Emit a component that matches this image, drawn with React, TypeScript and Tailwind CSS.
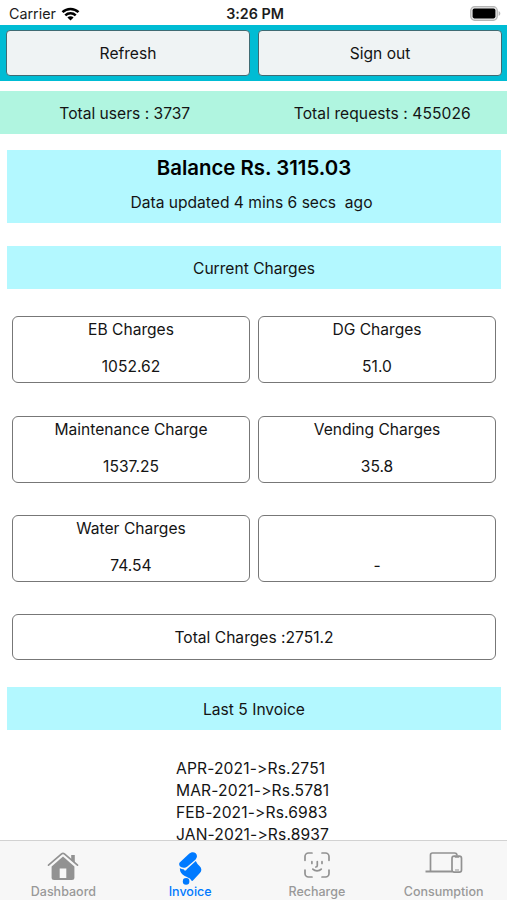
import React from 'react'

type Tab = {
  label: string
  icon: React.ReactNode
  active?: boolean
}

const charges = [
  { label: 'EB Charges', value: '1052.62' },
  { label: 'DG Charges', value: '51.0' },
  { label: 'Maintenance Charge', value: '1537.25' },
  { label: 'Vending Charges', value: '35.8' },
  { label: 'Water Charges', value: '74.54' },
  { label: '', value: '-' },
]

const invoices = ['APR-2021->Rs.2751', 'MAR-2021->Rs.5781', 'FEB-2021->Rs.6983', 'JAN-2021->Rs.8937']

const WifiIcon = () => (
  <svg width="19" height="14" viewBox="0 0 18 14" fill="none" stroke="#000" strokeWidth="2.5">
    <path d="M1 5.2a11.4 11.4 0 0 1 16 0" />
    <path d="M3.8 8.3a7.4 7.4 0 0 1 10.4 0" />
    <path d="M9 13.6 5.9 10.5a4.4 4.4 0 0 1 6.2 0Z" fill="#000" stroke="none" />
  </svg>
)

const BatteryIcon = () => (
  <svg width="31" height="15" viewBox="0 0 31 15">
    <rect x="0.7" y="0.7" width="26.6" height="13.6" rx="4" fill="#e4e4e4" stroke="#b5b5b5" strokeWidth="1.2" />
    <rect x="2.6" y="2.6" width="22.8" height="9.8" rx="1.8" fill="#000" />
    <path d="M28.6 5v5c1-.4 1.7-1.4 1.7-2.5S29.6 5.4 28.6 5Z" fill="#b5b5b5" />
  </svg>
)

const HouseIcon = () => (
  <svg width="32" height="36" viewBox="0 0 32 36" fill="#929292">
    <path d="M1.5 15.2 14.6 3.9a2.1 2.1 0 0 1 2.8 0L30.5 15.2" fill="none" stroke="#929292" strokeWidth="1.7" strokeLinecap="round" />
    <path d="M24.2 5h3.6v8l-3.6-3.1Z" />
    <path d="M16 6.6 4.6 16.5V27.5a2.5 2.5 0 0 0 2.5 2.5h17.8a2.5 2.5 0 0 0 2.5-2.5V16.5Z" />
    <path d="M12.7 18.5h6.6V28h-6.6Z" fill="#f7f7f7" />
  </svg>
)

const InvoiceIcon = () => (
  <svg width="24" height="36" viewBox="0 0 24 36" fill="#007aff">
    <path d="M1.7 12.6 10.8 4C12.8 2 15.8 1.5 17.7 3.3S19.3 7.8 17.4 9.7L9.4 16.4C7 18.4 3.2 17.8 1.9 16.2 1 14.9.9 13.6 1.7 12.6Z" />
    <path d="M1.9 18.1C3.3 19.1 4.600 19.400 6 19.400Q6.500 20.800 7.300 20.600T9 18.900L17.800 11Q18.800 13.500 21.500 16Q25 19.400 21.900 23L15.200 30.300Q13.900 31.700 13.100 29.900C11.800 27.600 9 27.200 6.700 25.900 3.200 24 1.700 21.400 1.900 18.100Z" />
    <circle cx="8.100" cy="31.400" r="3.300" />
  </svg>
)

const FaceIcon = () => (
  <svg width="28" height="36" viewBox="0 0 28 36" fill="none" stroke="#929292" strokeWidth="1.7" strokeLinecap="round">
    <path d="M2 10.3V6.5A3.5 3.5 0 0 1 5.5 3H9M19 3h3.5A3.5 3.5 0 0 1 26 6.5v3.8M26 20v3.5A3.5 3.5 0 0 1 22.5 27H19M9 27H5.5A3.5 3.5 0 0 1 2 23.5V20" />
    <path d="M8.9 11.7v1.7M19 11.7v1.7M14.3 11.6v4c0 1-.5 1.4-1.5 1.4M9.8 19.2c2.3 2.3 6.2 2.3 8.5 0" />
  </svg>
)

const DevicesIcon = () => (
  <svg width="38" height="36" viewBox="0 0 38 36" fill="none" stroke="#929292" strokeWidth="1.7">
    <path d="M5.5 21.5V5A2 2 0 0 1 7.5 3h22a2.5 2.5 0 0 1 2.5 2.5" />
    <path d="M27 21.5H.5" strokeWidth="2" />
    <rect x="27" y="6.2" width="9.5" height="16" rx="2.2" />
    <path d="M29.7 6.8h4.5" strokeWidth="1.9" />
    <path d="M30 20h4" strokeWidth="1" />
  </svg>
)

const tabs: Tab[] = [
  { label: 'Dashbaord', icon: <HouseIcon /> },
  { label: 'Invoice', icon: <InvoiceIcon />, active: true },
  { label: 'Recharge', icon: <FaceIcon /> },
  { label: 'Consumption', icon: <DevicesIcon /> },
]

const StatusBar = () => (
  <header className="grid h-[25px] shrink-0 grid-cols-[1fr_auto_1fr] items-center pl-[9px] pr-[6px] pt-[2px] text-[14.3px] text-[#1c1c1c]">
    <div className="flex items-center gap-[5px]">
      <span>Carrier</span>
      <WifiIcon />
    </div>
    <span className="text-center font-semibold">3:26 PM</span>
    <div className="flex justify-end">
      <BatteryIcon />
    </div>
  </header>
)

const SectionTitle = ({ children }: { children: React.ReactNode }) => (
  <h2 className="mr-1.5 ml-[7px] flex h-[43px] shrink-0 items-center justify-center bg-[#b3f8ff] pt-0.5">{children}</h2>
)

const ActionButton = ({ children }: { children: React.ReactNode }) => (
  <button className="h-[46px] flex-1 rounded-[4px] border border-[#3f6b73] bg-[#eff3f4] pt-0.5">{children}</button>
)

const App: React.FC = () => {
  return (
    <div className="flex h-[900px] w-[507px] flex-col overflow-hidden bg-white font-['Inter','Liberation_Sans',sans-serif] text-[15.6px] text-[#141414] [font-feature-settings:'calt'_0]">
      <StatusBar />

      <div className="flex h-14 shrink-0 gap-2 bg-[#00bcd4] pr-[5px] pl-1.5 pt-[5px]">
        <ActionButton>Refresh</ActionButton>
        <ActionButton>Sign out</ActionButton>
      </div>

      <div className="mt-2.5 grid h-[43px] shrink-0 grid-cols-2 items-center bg-[#b0f5e0] pt-0.5 text-center">
        <span className="pr-1">Total users : 3737</span>
        <span className="pl-1 tracking-[0.06px]">Total requests : 455026</span>
      </div>

      <main className="flex min-h-0 flex-1 flex-col pt-4">
        <section className="mr-1.5 ml-[7px] h-[73px] shrink-0 bg-[#b3f8ff] pt-[5px] text-center">
          <h1 className="text-[20.4px] leading-[26px] font-semibold text-black">Balance Rs. 3115.03</h1>
          <p className="mt-2.5 mr-[5px] whitespace-pre leading-6">Data updated 4 mins 6 secs  ago</p>
        </section>

        <div className="h-[23px] shrink-0" />
        <SectionTitle>Current Charges</SectionTitle>

        <div className="mr-[11px] ml-3 mt-[27px] grid shrink-0 grid-cols-2 gap-x-2 gap-y-[32.5px] text-center">
          {charges.map((charge, i) => (
            <div key={i} className="flex h-[67px] flex-col justify-between rounded-[6px] border border-[#777] pt-[2px] pb-1 leading-[22px]">
              <span className="h-[22px]">{charge.label}</span>
              <span>{charge.value}</span>
            </div>
          ))}
        </div>

        <div className="mr-[11px] ml-3 mt-8 mb-[27px] flex h-[46px] shrink-0 items-center justify-center rounded-[6px] border border-[#777] pt-px">
          Total Charges :2751.2
        </div>

        <SectionTitle>Last 5 Invoice</SectionTitle>

        <ul className="mt-7 ml-[176px] leading-[22px] tracking-[0.14px]">
          {invoices.map((invoice) => (
            <li key={invoice}>{invoice}</li>
          ))}
        </ul>
      </main>

      <nav className="relative grid h-[60px] shrink-0 grid-cols-4 border-t border-[#d2d2d2] bg-[#f7f7f7]">
        {tabs.map((tab) => (
          <div key={tab.label} className={`flex flex-col items-center pt-[9px] ${tab.active ? 'text-[#007aff]' : 'text-[#999]'}`}>
            {tab.icon}
            <span className="-mt-0.5 text-[12.5px] leading-4 font-medium">{tab.label}</span>
          </div>
        ))}
      </nav>
    </div>
  )
}

export default App
